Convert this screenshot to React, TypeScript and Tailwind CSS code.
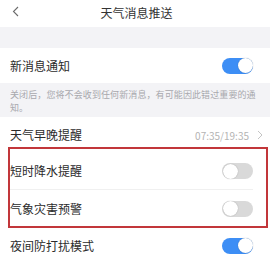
import React from "react";

type ToggleProps = { on: boolean };

function Toggle({ on }: ToggleProps) {
  return (
    <div
      className={`relative h-[16px] w-[31px] rounded-full ${
        on ? "bg-[#3d8ef5]" : "bg-[#d9d9d9]"
      }`}
    >
      <div
        className={`absolute top-[0.5px] h-[15px] w-[15px] rounded-full bg-white shadow-[0_0_1px_rgba(0,0,0,0.35)] ${
          on ? "right-[0.5px]" : "left-[0.5px]"
        }`}
      />
    </div>
  );
}

function Row({
  label,
  children,
  height = "h-[37px]",
  divider = false,
}: {
  label: string;
  children?: React.ReactNode;
  height?: string;
  divider?: boolean;
}) {
  return (
    <div className={`flex ${height} items-center bg-white pl-[10px] pr-[17px]`}>
      <div
        className={`flex h-full flex-1 items-center justify-between ${
          divider ? "border-b border-[#f0f0f0]" : ""
        }`}
      >
        <span className="text-[12px] text-[#2b2b2b]">{label}</span>
        {children}
      </div>
    </div>
  );
}

export default function App() {
  return (
    <div
      className="relative h-[260px] w-[270px] overflow-hidden bg-white"
      style={{ fontFamily: '"Noto Sans CJK SC", "Noto Sans", sans-serif' }}
    >
      {/* header */}
      <div className="relative flex h-[27px] items-center justify-center pb-[2px]">
        <svg
          className="absolute left-[12px] top-[6px]"
          width="8"
          height="11"
          viewBox="0 0 8 11"
          fill="none"
        >
          <path d="M6 1L1.5 5.5L6 10" stroke="#6b6b6b" strokeWidth="1.1" />
        </svg>
        <span className="ml-[3px] text-[12px] text-[#333]">天气消息推送</span>
      </div>

      <div className="h-[21px] bg-[#f3f3f6]" />

      <Row label="新消息通知" height="h-[35px]">
        <Toggle on />
      </Row>

      <div className="flex h-[34px] flex-col bg-[#f3f3f6] px-[10px] pt-[5px] text-[9px] leading-[13px] text-[#a8a8ad]">
        <div className="whitespace-nowrap tracking-[0.1px]">
          关闭后，您将不会收到任何新消息，有可能因此错过重要的通
        </div>
        <div>知。</div>
      </div>

      <Row label="天气早晚提醒" height="h-[36px]">
        <div className="mr-[-10px] flex items-center gap-[8px]">
          <span className="text-[10px] text-[#b4b4b4]">07:35/19:35</span>
          <svg width="6" height="10" viewBox="0 0 6 10" fill="none">
            <path d="M1 1L5 5L1 9" stroke="#c4c4c4" strokeWidth="1" />
          </svg>
        </div>
      </Row>

      <Row label="短时降水提醒" divider>
        <Toggle on={false} />
      </Row>
      <Row label="气象灾害预警">
        <Toggle on={false} />
      </Row>
      <Row label="夜间防打扰模式">
        <Toggle on />
      </Row>

      {/* annotation box */}
      <div className="absolute left-[8px] top-[147px] h-[81px] w-[260px] border-2 border-[#c2363a]" />
    </div>
  );
}
